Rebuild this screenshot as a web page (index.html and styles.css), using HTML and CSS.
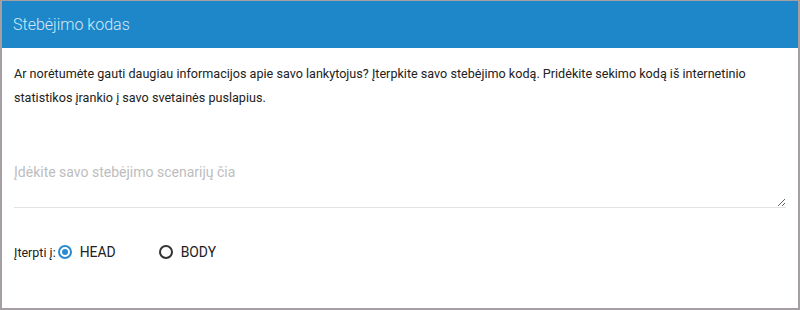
FILE: index.html
```html
<!DOCTYPE html>
<html lang="lt">
<head>
    <meta charset="UTF-8">
    <title>Stebėjimo kodas</title>
    <link rel="stylesheet" href="styles.css">
</head>
<body>

<div class="panel">
    <div class="panel-header">Stebėjimo kodas</div>
    <div class="panel-body">
        <p class="intro">Ar norėtumėte gauti daugiau informacijos apie savo lankytojus? Įterpkite savo stebėjimo kodą. Pridėkite sekimo kodą iš internetinio statistikos įrankio į savo svetainės puslapius.</p>

        <textarea class="code" placeholder="Įdėkite savo stebėjimo scenarijų čia"></textarea>

        <div class="placement">
            <span class="placement-label">Įterpti į:</span>
            <label class="radio">
                <input type="radio" name="place" value="head" checked>
                <span class="dot"></span>
                HEAD
            </label>
            <label class="radio">
                <input type="radio" name="place" value="body">
                <span class="dot"></span>
                BODY
            </label>
        </div>
    </div>
</div>

</body>
</html>
```

FILE: styles.css
```css
html, body {
    margin: 0;
    height: 100%;
}
body {
    font-family: Roboto, "Noto Sans", sans-serif;
    color: #212121;
    background: #fff;
}
.panel {
    box-sizing: border-box;
    height: 310px;
    border: 2px solid #a59fa3;
    border-top-width: 1px;
    background: #fff;
}
.panel-header {
    box-sizing: border-box;
    height: 47px;
    background: #1e87c9;
    color: #d4e9f7;
    font-size: 16px;
    font-weight: 300;
    line-height: 46px;
    padding: 1px 11px 0 11px;
}
.panel-body {
    padding: 14px 12px 0 12px;
}
.intro {
    margin: 0;
    font-size: 12.6px;
    line-height: 24px;
    color: #222;
}
.code {
    display: block;
    box-sizing: border-box;
    width: 100%;
    height: 82px;
    margin-top: 16px;
    padding: 38px 0 0 0;
    border: none;
    border-bottom: 1px solid #e2e2e2;
    font-family: Roboto, sans-serif;
    font-size: 14px;
    color: #333;
    outline: none;
    resize: vertical;
}
.code::placeholder {
    color: #bdbdbd;
}
.placement {
    display: flex;
    align-items: center;
    margin-top: 36px;
    font-size: 12.5px;
}
.placement-label {
    margin-right: 2px;
}
.radio {
    display: flex;
    align-items: center;
    font-size: 13.9px;
    color: #222;
    margin-right: 43px;
    cursor: pointer;
}
.radio input {
    display: none;
}
.dot {
    box-sizing: border-box;
    width: 14px;
    height: 14px;
    border: 2px solid #333;
    border-radius: 50%;
    margin-right: 8px;
    position: relative;
}
.radio input:checked + .dot {
    border-color: #2a8bd0;
}
.radio input:checked + .dot:before {
    content: "";
    position: absolute;
    top: 2px;
    left: 2px;
    width: 6px;
    height: 6px;
    border-radius: 50%;
    background: #2a8bd0;
}
```
